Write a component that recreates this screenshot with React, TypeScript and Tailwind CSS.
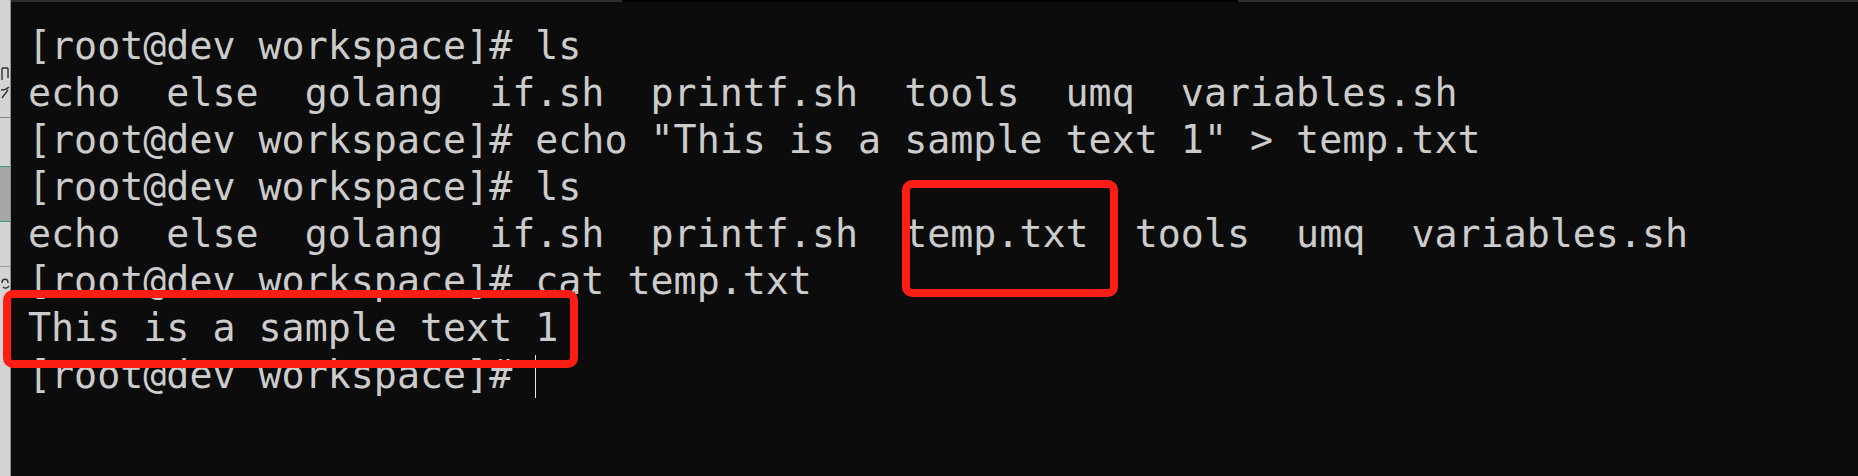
const lines = [
  "[root@dev workspace]# ls",
  "echo  else  golang  if.sh  printf.sh  tools  umq  variables.sh",
  '[root@dev workspace]# echo "This is a sample text 1" > temp.txt',
  "[root@dev workspace]# ls",
  "echo  else  golang  if.sh  printf.sh  temp.txt  tools  umq  variables.sh",
  "[root@dev workspace]# cat temp.txt",
  "This is a sample text 1",
];

function SideStrip() {
  // sliver of another window peeking out on the left
  return (
    <div className="flex w-[11px] shrink-0 flex-col border-r border-[#8c8c8c] bg-[#d4d4d4]">
      <div className="h-[64px]" />
      <div className="h-[44px]">
        <svg width="10" height="44" viewBox="0 0 10 44">
          <path d="M2 4v12M2 4h6M8 4v10" stroke="#333" strokeWidth="1.4" fill="none" />
          <path d="M1 26c3 0 6-1 8-3M2 34l6-8" stroke="#333" strokeWidth="1.4" fill="none" />
        </svg>
      </div>
      <div className="h-[9px]" />
      <div className="h-px bg-[#8a8a8a]" />
      <div className="h-[48px]" />
      <div className="h-px bg-[#3a9d74]" />
      <div className="h-[54px] bg-[#a6a6a6]" />
      <div className="h-px bg-[#3a9d74]" />
      <div className="h-[44px]" />
      <div className="h-px bg-[#9a9a9a]" />
      <div className="h-[30px]">
        <svg width="10" height="30" viewBox="0 0 10 30">
          <path d="M2 16c0-5 6-5 6 0M3 20c2 2 5 1 6-1" stroke="#333" strokeWidth="1.4" fill="none" />
        </svg>
      </div>
      <div className="flex-1" />
    </div>
  );
}

export default function App() {
  return (
    <div className="relative flex h-[476px] w-[1858px] overflow-hidden bg-[#0c0c0c]">
      <SideStrip />

      <div className="flex flex-1 flex-col">
        <div className="flex h-[2px] shrink-0">
          <div className="w-[611px] bg-[#2e2e2e]" />
          <div className="w-[616px] bg-black" />
          <div className="flex-1 bg-[#2e2e2e]" />
        </div>

        <div
          className="flex flex-col pl-[17px] pt-[20px] text-[38.3px] leading-[47px] text-[#cccccc]"
          style={{ fontFamily: '"DejaVu Sans Mono", "Liberation Mono", monospace' }}
        >
          {lines.map((line, i) => (
            <div key={i} className="h-[47px] whitespace-pre">
              {line}
            </div>
          ))}
          <div className="flex h-[47px] items-end whitespace-pre">
            <span>[root@dev workspace]# </span>
            <span className="h-[43px] w-px bg-[#e6e6e6]" />
          </div>
        </div>
      </div>

      {/* red annotation boxes */}
      <div className="absolute left-[902px] top-[180px] h-[117px] w-[216px] rounded-[10px] border-[8px] border-[#fc1d14]" />
      <div className="absolute left-[3px] top-[290px] h-[78px] w-[575px] rounded-[10px] border-[8px] border-[#fc1d14]" />
    </div>
  );
}
